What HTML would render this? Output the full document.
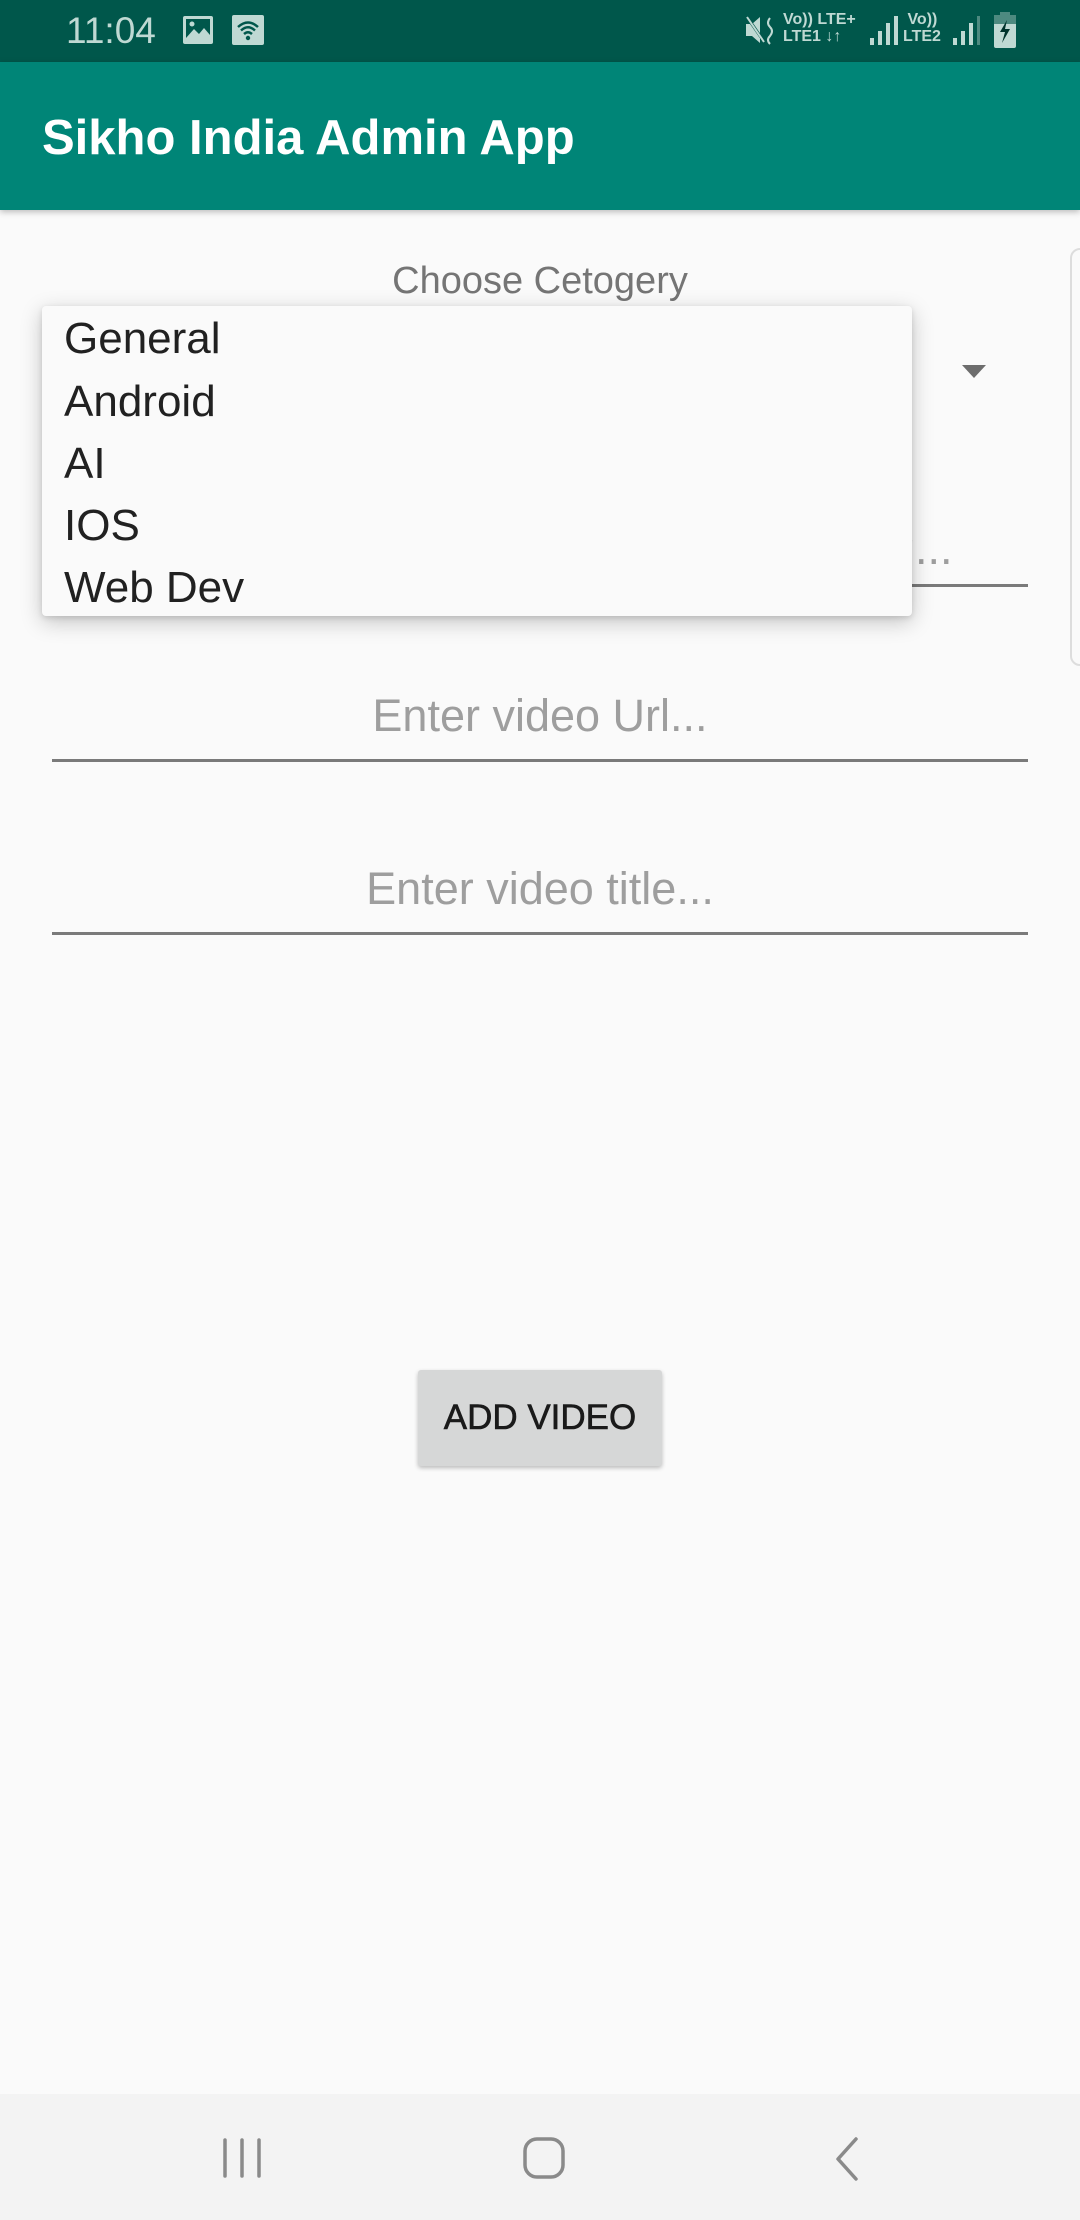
<!DOCTYPE html>
<html><head><meta charset="utf-8"><style>
*{margin:0;padding:0;box-sizing:border-box}
body{width:1080px;height:2220px;background:#fafafa;font-family:"Liberation Sans",sans-serif;position:relative;overflow:hidden}
.abs{position:absolute}
#sb{left:0;top:0;width:1080px;height:62px;background:#00574b;color:#bfd9d3}
#tb{left:0;top:62px;width:1080px;height:148px;background:#008577;box-shadow:0 2px 6px rgba(0,0,0,.25)}
#title{left:42px;top:110px;font-size:49px;font-weight:bold;color:#fff;line-height:56px}
.hint{color:#9e9e9e;font-size:45px;width:1080px;text-align:center;left:0}
.line{left:52px;width:976px;height:3px;background:#7a7a7a}
#dd{left:42px;top:306px;width:870px;height:310px;background:#fafafa;border-radius:4px;box-shadow:0 6px 22px rgba(0,0,0,.22),0 2px 6px rgba(0,0,0,.12)}
.it{left:22px;font-size:44px;color:#212121;line-height:50px}
#nav{left:0;top:2094px;width:1080px;height:126px;background:#f3f3f3}
</style></head><body>
<div id="sb" class="abs">
 <div class="abs" style="left:66px;top:10px;font-size:37px;line-height:42px">11:04</div>
 <svg class="abs" style="left:182px;top:15px" width="32" height="30" viewBox="0 0 32 30"><rect x="1" y="1" width="30" height="28" rx="2" fill="#bfd9d3"/><rect x="4" y="4" width="24" height="19" fill="#00574b"/><circle cx="10" cy="9" r="2.5" fill="#bfd9d3"/><path d="M4 23 L12 14 L17 19 L22 13 L28 20 L28 23Z" fill="#bfd9d3"/></svg>
 <svg class="abs" style="left:232px;top:15px" width="32" height="30" viewBox="0 0 32 30"><rect x="0" y="0" width="32" height="30" rx="2" fill="#bfd9d3"/><path d="M6 12 Q16 3 26 12 M9 15.5 Q16 9 23 15.5 M12 19 Q16 15.5 20 19" stroke="#00574b" stroke-width="2.5" fill="none"/><circle cx="16" cy="23" r="2.2" fill="#00574b"/></svg>
 <svg class="abs" style="left:745px;top:14px" width="30" height="32" viewBox="0 0 30 32"><path d="M1 10 H7 L15 3 V29 L7 22 H1Z" fill="#bfd9d3"/><path d="M2 3 L20 29" stroke="#00574b" stroke-width="3"/><path d="M2 3 L19 28" stroke="#bfd9d3" stroke-width="2"/><path d="M25 4 Q21 9 25 13 Q29 17 25 22 Q21 26 25 30" stroke="#bfd9d3" stroke-width="2" fill="none"/></svg>
 <div class="abs" style="left:783px;top:11px;font-size:16px;font-weight:bold;line-height:17px">Vo)) LTE+<br>LTE1 ↓↑</div>
 <svg class="abs" style="left:870px;top:14px" width="28" height="32"><rect x="0" y="24" width="4" height="7" fill="#bfd9d3"/><rect x="8" y="17" width="4" height="14" fill="#bfd9d3"/><rect x="16" y="9" width="4" height="22" fill="#bfd9d3"/><rect x="24" y="2" width="4" height="29" fill="#bfd9d3"/></svg>
 <div class="abs" style="left:903px;top:11px;font-size:16px;font-weight:bold;line-height:17px">&nbsp;Vo))<br>LTE2</div>
 <svg class="abs" style="left:953px;top:14px" width="28" height="32"><rect x="0" y="24" width="4" height="7" fill="#bfd9d3"/><rect x="8" y="17" width="4" height="14" fill="#bfd9d3"/><rect x="16" y="9" width="4" height="22" fill="#bfd9d3"/><rect x="24" y="2" width="3" height="29" fill="#4d8a80"/></svg>
 <svg class="abs" style="left:994px;top:12px" width="22" height="36" viewBox="0 0 22 36"><rect x="6" y="0" width="10" height="4" fill="#4d8a80"/><rect x="0" y="3" width="22" height="33" rx="2" fill="#bfd9d3"/><rect x="0" y="3" width="22" height="9" fill="#4d8a80"/><path d="M13 8 L6 20 H11 L8 31 L16 17 H11Z" fill="#00332c"/></svg>
</div>
<div id="tb" class="abs"></div>
<div id="title" class="abs">Sikho India Admin App</div>

<div class="abs" style="left:1070px;top:248px;width:30px;height:418px;border:2px solid #ddd;border-radius:10px"></div>
<div class="abs" style="left:0;top:260px;width:1080px;text-align:center;font-size:38px;color:#757575">Choose Cetogery</div>
<svg class="abs" style="left:962px;top:365px" width="24" height="14"><path d="M0 0 H24 L12 13Z" fill="#6d6d6d"/></svg>
<div class="abs" style="left:890px;top:523px;font-size:45px;color:#9e9e9e">g...</div>
<div class="line abs" style="top:584px"></div>

<div class="hint abs" style="top:690px">Enter video Url...</div>
<div class="line abs" style="top:759px"></div>
<div class="hint abs" style="top:863px">Enter video title...</div>
<div class="line abs" style="top:932px"></div>

<div id="dd" class="abs">
 <div class="it abs" style="top:8px">General</div>
 <div class="it abs" style="top:71px">Android</div>
 <div class="it abs" style="top:133px">AI</div>
 <div class="it abs" style="top:195px">IOS</div>
 <div class="it abs" style="top:257px">Web Dev</div>
</div>

<div class="abs" style="left:418px;top:1370px;width:244px;height:96px;background:#d6d7d7;border-radius:3px;box-shadow:0 2px 4px rgba(0,0,0,.25);text-align:center;line-height:96px;font-size:35px;color:#1a1a1a;-webkit-text-stroke:0.6px #1a1a1a">ADD VIDEO</div>

<div id="nav" class="abs">
 <svg class="abs" style="left:220px;top:44px" width="44" height="40"><path d="M5 2 V38 M22 2 V38 M39 2 V38" stroke="#8a8a8a" stroke-width="3.5" stroke-linecap="round"/></svg>
 <svg class="abs" style="left:522px;top:42px" width="44" height="44"><rect x="3" y="3" width="38" height="38" rx="12" stroke="#8a8a8a" stroke-width="3.5" fill="none"/></svg>
 <svg class="abs" style="left:832px;top:42px" width="30" height="46"><path d="M24 3 L6 23 L24 43" stroke="#8a8a8a" stroke-width="3.5" fill="none" stroke-linecap="round" stroke-linejoin="round"/></svg>
</div>
</body></html>
